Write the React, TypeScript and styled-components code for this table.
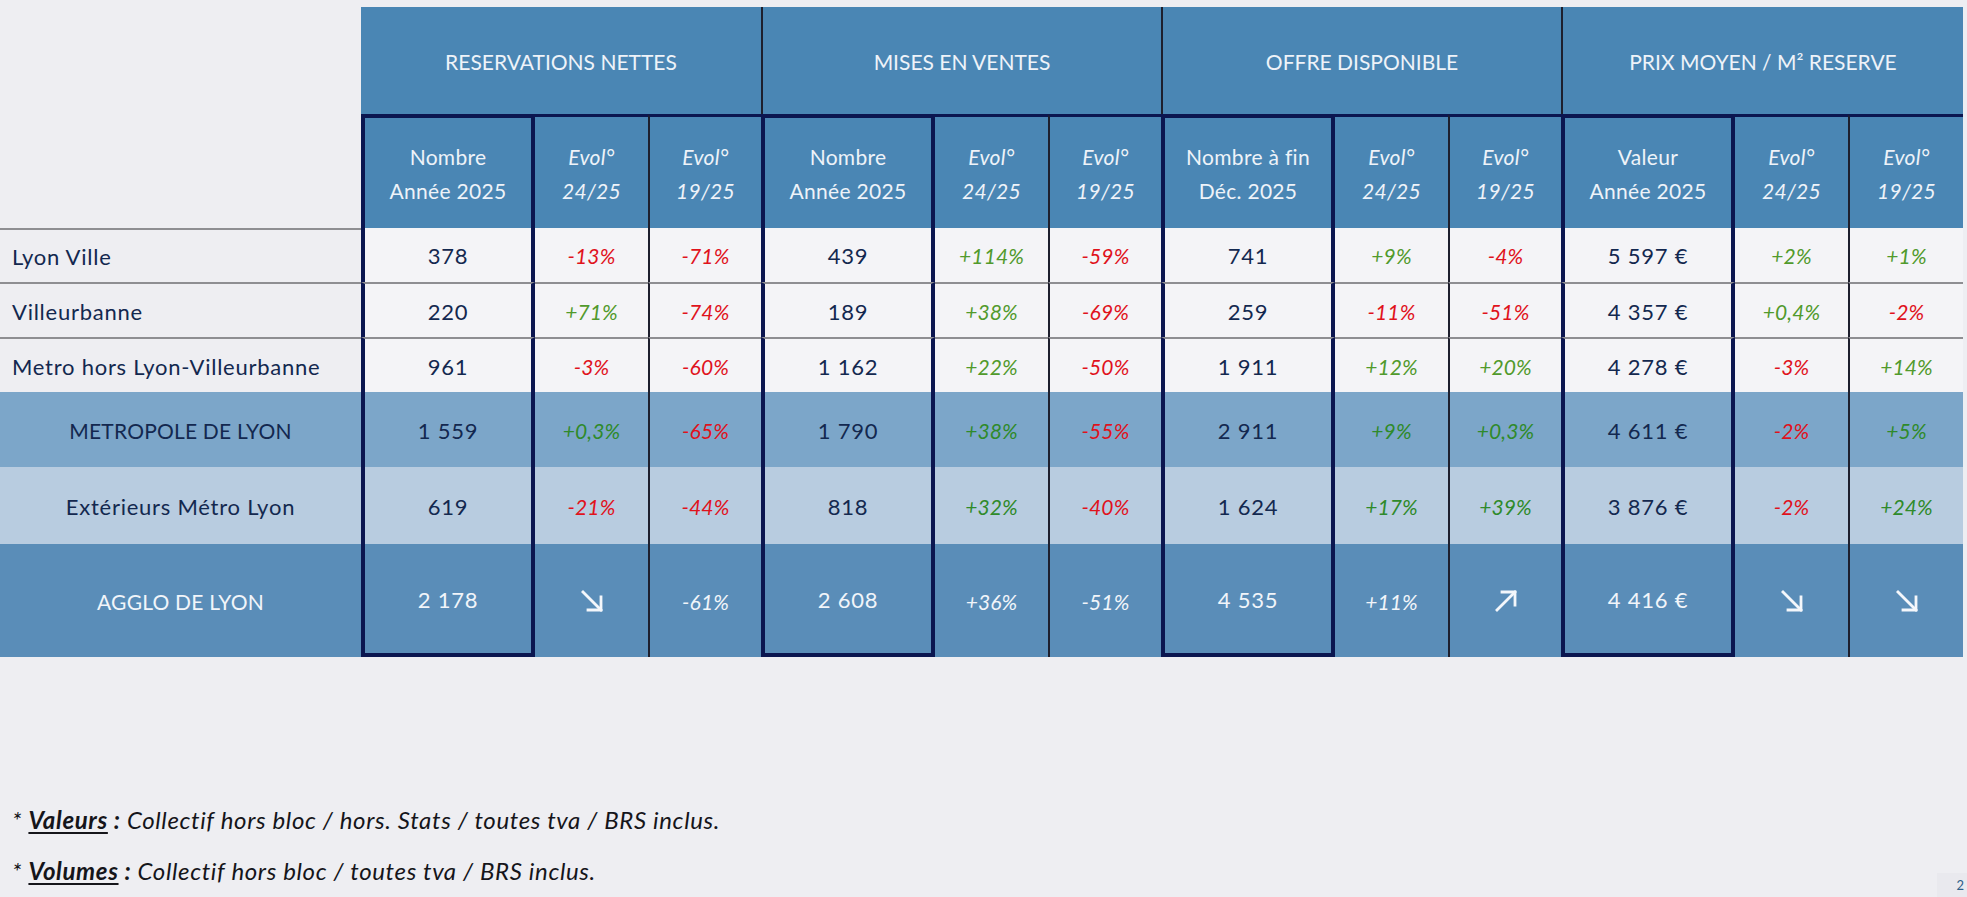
import React from "react";
import styled, { createGlobalStyle, css } from "styled-components";

const GlobalStyle = createGlobalStyle`
  html, body {
    margin: 0;
    padding: 0;
    background: #eeeef2;
  }
  body {
    font-family: "Lato", "Open Sans", sans-serif;
    color: #13284f;
  }
`;

const NAVY = "#0b1650";
const RULE = "#1d1f2e";

type Tone = "plain" | "metro" | "ext" | "agglo";

const toneBg: Record<Tone, string> = {
  plain: "#f4f4f7",
  metro: "#7ca6c9",
  ext: "#b8cce0",
  agglo: "#5a8db8",
};

const Page = styled.div`
  position: relative;
  width: 1967px;
  height: 897px;
  padding-top: 7px;
  box-sizing: border-box;
  overflow: hidden;
`;

const Grid = styled.div`
  display: grid;
  width: 1961px;
  grid-template-columns: 361px repeat(3, 174px 113px 113px) 174px 113px 115px;
  grid-template-rows: 107px 114px 54px 55px 55px 75px 77px 113px;
`;

const Blank = styled.div``;

const GroupHead = styled.div<{ $divider: boolean }>`
  grid-column: span 3;
  background: #4a86b4;
  color: #eef3f9;
  font-size: 21px;
  display: flex;
  align-items: center;
  justify-content: center;
  padding-top: 2px;
  box-sizing: border-box;
  ${(p) => p.$divider && css`border-left: 2px solid ${RULE};`}
`;

const SubHead = styled.div<{ $box: boolean; $rule: boolean }>`
  background: #4a86b4;
  color: #eef3f9;
  font-size: 21px;
  line-height: 34px;
  letter-spacing: 0.3px;
  text-align: center;
  display: flex;
  flex-direction: column;
  align-items: center;
  justify-content: center;
  padding-top: 2px;
  box-sizing: border-box;
  border-top: 3px solid ${NAVY};
  ${(p) =>
    p.$box &&
    css`
      border-top-width: 4px;
      border-left: 4px solid ${NAVY};
      border-right: 4px solid ${NAVY};
    `}
  ${(p) => p.$rule && css`border-left: 2px solid ${RULE};`}
`;

const Italic = styled.span`
  font-style: italic;
`;

const Label = styled.div<{ $tone: Tone; $sep: boolean }>`
  display: flex;
  align-items: center;
  box-sizing: border-box;
  padding-top: 1px;
  white-space: nowrap;
  font-size: ${(p) => (p.$tone === "metro" || p.$tone === "agglo" ? "21px" : "22px")};
  letter-spacing: ${(p) => (p.$tone === "metro" || p.$tone === "agglo" ? "0.2px" : "0.75px")};
  background: ${(p) => (p.$tone === "plain" ? "transparent" : toneBg[p.$tone])};
  color: ${(p) => (p.$tone === "agglo" ? "#f1f5fa" : "#13284f")};
  justify-content: ${(p) => (p.$tone === "plain" ? "flex-start" : "center")};
  padding-left: ${(p) => (p.$tone === "plain" ? "12px" : "0")};
  ${(p) => p.$sep && css`border-top: 2px solid #8e8e92;`}
`;

const Cell = styled.div<{
  $tone: Tone;
  $box: boolean;
  $rule: boolean;
  $bottom: boolean;
  $sep: boolean;
  $kind: "num" | "up" | "down" | "flat";
}>`
  display: flex;
  align-items: center;
  justify-content: center;
  box-sizing: border-box;
  padding-top: 1px;
  white-space: nowrap;
  background: ${(p) => toneBg[p.$tone]};
  font-size: ${(p) => (p.$kind === "num" ? "22px" : "21px")};
  letter-spacing: ${(p) => (p.$kind === "num" ? "0.8px" : "0.1px")};
  font-style: ${(p) => (p.$kind === "num" ? "normal" : "italic")};
  color: ${(p) => {
    if (p.$tone === "agglo") return "#f1f5fa";
    if (p.$kind === "up") return p.$tone === "plain" ? "#519a2c" : "#2f8a2a";
    if (p.$kind === "down") return "#e0121c";
    return "#13284f";
  }};
  ${(p) => p.$sep && css`border-top: 2px solid #8e8e92;`}
  ${(p) =>
    p.$box &&
    css`
      border-left: 4px solid ${NAVY};
      border-right: 4px solid ${NAVY};
    `}
  ${(p) => p.$bottom && css`border-bottom: 4px solid ${NAVY};`}
  ${(p) => p.$rule && css`border-left: 2px solid ${RULE};`}
`;

const ArrowIcon = styled.svg`
  width: 28px;
  height: 28px;
  display: block;
`;

function Arrow({ dir }: { dir: "up" | "down" }) {
  return (
    <ArrowIcon viewBox="0 0 28 28" fill="none" stroke="#f4f7fb" strokeWidth={2.8} strokeLinecap="square">
      {dir === "down" ? (
        <>
          <path d="M5 5 L23 23" />
          <path d="M23 10 V23 H10" />
        </>
      ) : (
        <>
          <path d="M5 23 L23 5" />
          <path d="M10 5 H23 V18" />
        </>
      )}
    </ArrowIcon>
  );
}

const Notes = styled.div`
  margin-top: 148px;
  padding-left: 12px;
  display: flex;
  flex-direction: column;
  gap: 22px;
  font-size: 24px;
  font-style: italic;
  color: #15151a;
  letter-spacing: 0.65px;
`;

const NoteKey = styled.b`
  font-weight: 700;
`;

const Under = styled.span`
  text-decoration: underline;
  text-underline-offset: 3px;
`;

const PageNum = styled.div`
  position: absolute;
  right: 0;
  bottom: 0;
  width: 30px;
  height: 24px;
  background: #e9e9ee;
  color: #2e5f8a;
  font-size: 13px;
  line-height: 24px;
  text-align: right;
  padding-right: 3px;
  box-sizing: border-box;
`;

const groups = [
  { title: "RESERVATIONS NETTES", head: ["Nombre", "Année 2025"] },
  { title: "MISES EN VENTES", head: ["Nombre", "Année 2025"] },
  { title: "OFFRE DISPONIBLE", head: ["Nombre à fin", "Déc. 2025"] },
  { title: "PRIX MOYEN / M² RESERVE", head: ["Valeur", "Année 2025"] },
];

const rows: { label: string; tone: Tone; values: string[] }[] = [
  {
    label: "Lyon Ville",
    tone: "plain",
    values: ["378", "-13%", "-71%", "439", "+114%", "-59%", "741", "+9%", "-4%", "5 597 €", "+2%", "+1%"],
  },
  {
    label: "Villeurbanne",
    tone: "plain",
    values: ["220", "+71%", "-74%", "189", "+38%", "-69%", "259", "-11%", "-51%", "4 357 €", "+0,4%", "-2%"],
  },
  {
    label: "Metro hors Lyon-Villeurbanne",
    tone: "plain",
    values: ["961", "-3%", "-60%", "1 162", "+22%", "-50%", "1 911", "+12%", "+20%", "4 278 €", "-3%", "+14%"],
  },
  {
    label: "METROPOLE DE LYON",
    tone: "metro",
    values: ["1 559", "+0,3%", "-65%", "1 790", "+38%", "-55%", "2 911", "+9%", "+0,3%", "4 611 €", "-2%", "+5%"],
  },
  {
    label: "Extérieurs Métro Lyon",
    tone: "ext",
    values: ["619", "-21%", "-44%", "818", "+32%", "-40%", "1 624", "+17%", "+39%", "3 876 €", "-2%", "+24%"],
  },
  {
    label: "AGGLO DE LYON",
    tone: "agglo",
    values: ["2 178", "↘", "-61%", "2 608", "+36%", "-51%", "4 535", "+11%", "↗", "4 416 €", "↘", "↘"],
  },
];

function kindOf(v: string, col: number): "num" | "up" | "down" | "flat" {
  if (col % 3 === 0) return "num";
  if (v.startsWith("+")) return "up";
  if (v.startsWith("-")) return "down";
  return "flat";
}

export default function App() {
  return (
    <Page>
      <GlobalStyle />
      <Grid>
        <Blank />
        {groups.map((g, i) => (
          <GroupHead key={g.title} $divider={i > 0}>
            {g.title}
          </GroupHead>
        ))}

        <Blank />
        {groups.map((g) => (
          <React.Fragment key={g.title + "-sub"}>
            <SubHead $box $rule={false}>
              <span>{g.head[0]}</span>
              <span>{g.head[1]}</span>
            </SubHead>
            <SubHead $box={false} $rule={false}>
              <Italic>Evol°</Italic>
              <Italic>24/25</Italic>
            </SubHead>
            <SubHead $box={false} $rule>
              <Italic>Evol°</Italic>
              <Italic>19/25</Italic>
            </SubHead>
          </React.Fragment>
        ))}

        {rows.map((r, ri) => (
          <React.Fragment key={r.label}>
            <Label $tone={r.tone} $sep={r.tone === "plain"}>
              {r.label}
            </Label>
            {r.values.map((v, ci) => {
              const kind = kindOf(v, ci);
              return (
                <Cell
                  key={ci}
                  $tone={r.tone}
                  $box={ci % 3 === 0}
                  $rule={ci % 3 === 2}
                  $bottom={ci % 3 === 0 && ri === rows.length - 1}
                  $sep={r.tone === "plain" && ri > 0}
                  $kind={kind}
                >
                  {v === "↘" ? <Arrow dir="down" /> : v === "↗" ? <Arrow dir="up" /> : v.replace(/ /g, "\u00a0")}
                </Cell>
              );
            })}
          </React.Fragment>
        ))}
      </Grid>

      <Notes>
        <div>
          *{" "}
          <NoteKey>
            <Under>Valeurs</Under> :
          </NoteKey>{" "}
          Collectif hors bloc / hors. Stats / toutes tva / BRS inclus.
        </div>
        <div>
          *{" "}
          <NoteKey>
            <Under>Volumes</Under> :
          </NoteKey>{" "}
          Collectif hors bloc / toutes tva / BRS inclus.
        </div>
      </Notes>
      <PageNum>2</PageNum>
    </Page>
  );
}
